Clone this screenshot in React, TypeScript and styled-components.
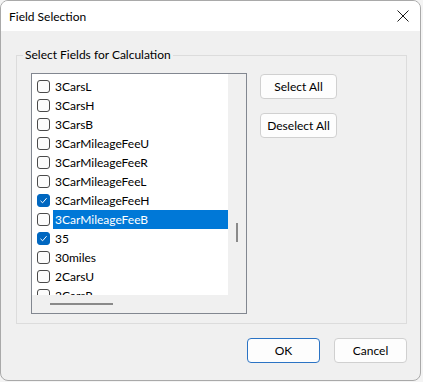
import styled, { createGlobalStyle } from "styled-components";

const font = `"Lato", "Liberation Sans", sans-serif`;

const GlobalStyle = createGlobalStyle`
  html, body {
    margin: 0;
    padding: 0;
    background: #f4f4f4;
  }
  body {
    font-family: ${font};
    font-size: 12px;
    color: #000;
  }
`;

const Window = styled.div`
  width: 421px;
  height: 381px;
  box-sizing: border-box;
  border: 1px solid #a9a9a9;
  border-radius: 8px;
  background: #f0f0f0;
  overflow: hidden;
  display: flex;
  flex-direction: column;
`;

const TitleBar = styled.div`
  height: 30px;
  background: #fff;
  display: flex;
  align-items: center;
  justify-content: space-between;
  padding: 0 8px 0 8px;
`;

const Title = styled.span`
  font-size: 12px;
  padding-top: 1px;
`;

const CloseButton = styled.div`
  width: 12px;
  height: 12px;
  margin-right: 3px;
  display: flex;
`;

const Body = styled.div`
  flex: 1;
  padding: 16px 13px 0 15px;
  display: flex;
  flex-direction: column;
`;

const GroupBox = styled.fieldset`
  margin: 0;
  padding: 0;
  width: 391px;
  height: 277px;
  box-sizing: border-box;
  border: 1px solid #dcdcdc;
`;

const Legend = styled.legend`
  padding: 0 2px;
  margin-left: 6px;
  line-height: 16px;
`;

const GroupInner = styled.div`
  display: flex;
  align-items: flex-start;
  padding-left: 14px;
`;

const ListBox = styled.div`
  margin-top: 10px;
  width: 216px;
  height: 241px;
  box-sizing: border-box;
  border: 1px solid #828790;
  display: grid;
  grid-template-columns: 196px 18px;
  grid-template-rows: 221px 18px;
  background: #f0f0f0;
`;

const Items = styled.div`
  background: #fff;
  overflow: hidden;
  padding-top: 3px;
`;

const Row = styled.div`
  height: 19px;
  display: flex;
  align-items: center;
  padding-left: 5px;
`;

const Check = styled.div<{ $on?: boolean }>`
  width: 13px;
  height: 13px;
  box-sizing: border-box;
  border-radius: 3px;
  border: 1px solid ${(p) => (p.$on ? "#0067c0" : "#4a4a4a")};
  background: ${(p) => (p.$on ? "#0067c0" : "#fcfcfc")};
  display: flex;
  align-items: center;
  justify-content: center;
  flex-shrink: 0;
`;

const Label = styled.span<{ $sel?: boolean }>`
  flex: 1;
  margin-left: 3px;
  padding-left: 2px;
  height: 19px;
  line-height: 19px;
  white-space: nowrap;
  background: ${(p) => (p.$sel ? "#0078d7" : "transparent")};
  color: ${(p) => (p.$sel ? "#fff" : "#000")};
`;

const VTrack = styled.div`
  padding: 149px 0 0 8px;
`;

const VThumb = styled.div`
  width: 2px;
  height: 19px;
  background: #8a8a8a;
`;

const HTrack = styled.div`
  padding: 8px 0 0 18px;
`;

const HThumb = styled.div`
  width: 63px;
  height: 2px;
  background: #8a8a8a;
`;

const Side = styled.div`
  margin: 11px 0 0 13px;
  display: flex;
  flex-direction: column;
  gap: 14px;
`;

const Button = styled.button<{ $primary?: boolean; $w?: number }>`
  width: ${(p) => p.$w ?? 73}px;
  height: 25px;
  box-sizing: border-box;
  border-radius: 4px;
  border: 1px solid ${(p) => (p.$primary ? "#2b73c4" : "#d0d0d0")};
  background: #fdfdfd;
  font-family: ${font};
  font-size: 12px;
  color: #000;
  padding: 0;
`;

const Footer = styled.div`
  display: flex;
  justify-content: flex-end;
  gap: 14px;
  padding-top: 14px;
  padding-right: 0;
`;

const fields = [
  { name: "3CarsL" },
  { name: "3CarsH" },
  { name: "3CarsB" },
  { name: "3CarMileageFeeU" },
  { name: "3CarMileageFeeR" },
  { name: "3CarMileageFeeL" },
  { name: "3CarMileageFeeH", on: true },
  { name: "3CarMileageFeeB", sel: true },
  { name: "35", on: true },
  { name: "30miles" },
  { name: "2CarsU" },
  { name: "2CarsR" },
];

const Tick = () => (
  <svg width="9" height="9" viewBox="0 0 9 9">
    <path d="M1.5 4.8 L3.6 6.8 L7.6 2.2" fill="none" stroke="#fff" strokeWidth="1" />
  </svg>
);

export default function App() {
  return (
    <>
      <GlobalStyle />
      <Window>
        <TitleBar>
          <Title>Field Selection</Title>
          <CloseButton>
            <svg width="12" height="12" viewBox="0 0 12 12">
              <path d="M0.5 0.5 L11.5 11.5 M11.5 0.5 L0.5 11.5" stroke="#1a1a1a" strokeWidth="1" />
            </svg>
          </CloseButton>
        </TitleBar>
        <Body>
          <GroupBox>
            <Legend>Select Fields for Calculation</Legend>
            <GroupInner>
              <ListBox>
                <Items>
                  {fields.map((f) => (
                    <Row key={f.name}>
                      <Check $on={f.on}>{f.on && <Tick />}</Check>
                      <Label $sel={f.sel}>{f.name}</Label>
                    </Row>
                  ))}
                </Items>
                <VTrack>
                  <VThumb />
                </VTrack>
                <HTrack>
                  <HThumb />
                </HTrack>
                <div />
              </ListBox>
              <Side>
                <Button $w={77}>Select All</Button>
                <Button $w={77}>Deselect All</Button>
              </Side>
            </GroupInner>
          </GroupBox>
          <Footer>
            <Button $primary>OK</Button>
            <Button>Cancel</Button>
          </Footer>
        </Body>
      </Window>
    </>
  );
}
